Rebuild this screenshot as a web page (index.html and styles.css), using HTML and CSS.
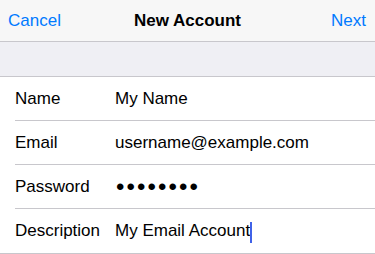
FILE: index.html
```html
<!DOCTYPE html>
<html>
<head>
<meta charset="utf-8">
<link rel="stylesheet" href="styles.css">
</head>
<body>
<div class="screen">
  <header class="nav">
    <span class="nav-btn">Cancel</span>
    <span class="nav-title">New Account</span>
    <span class="nav-btn">Next</span>
  </header>
  <div class="spacer"></div>
  <div class="group">
    <div class="row"><span class="label">Name</span><span class="value">My Name</span></div>
    <div class="row"><span class="label">Email</span><span class="value">username@example.com</span></div>
    <div class="row"><span class="label">Password</span><span class="value dots">••••••••</span></div>
    <div class="row last"><span class="label">Description</span><span class="value">My Email Account<span class="cursor"></span></span></div>
  </div>
</div>
</body>
</html>
```
FILE: styles.css
```css
html, body {
  margin: 0;
  padding: 0;
  background: #efeff4;
}
.screen {
  width: 375px;
  height: 254px;
  overflow: hidden;
  font-family: "Liberation Sans", Arial, sans-serif;
  font-size: 17px;
  color: #000;
  background: #efeff4;
}
.nav {
  height: 41px;
  background: #f7f7f7;
  border-bottom: 1px solid #c8c7cc;
  display: flex;
  align-items: center;
  justify-content: space-between;
  padding: 0 9px 0 8px;
  box-sizing: content-box;
}
.nav-btn {
  color: #007aff;
}
.nav-title {
  font-weight: bold;
  position: absolute;
  left: 0;
  right: 0;
  text-align: center;
  pointer-events: none;
}
.spacer {
  height: 34px;
}
.group {
  background: #fff;
  border-top: 1px solid #c8c7cc;
  border-bottom: 1px solid #c8c7cc;
  padding-left: 15px;
}
.row {
  height: 43px;
  display: flex;
  align-items: center;
  border-bottom: 1px solid #c8c7cc;
}
.row.last {
  border-bottom: none;
  height: 44px;
}
.label {
  width: 100px;
  flex: none;
}
.value {
  display: flex;
  align-items: center;
}
.dots {
  font-size: 24px;
  letter-spacing: 2.1px;
  margin-left: 1px;
}
.cursor {
  display: inline-block;
  width: 2px;
  height: 21px;
  margin-top: 2px;
  background: #4062e8;
}
```
